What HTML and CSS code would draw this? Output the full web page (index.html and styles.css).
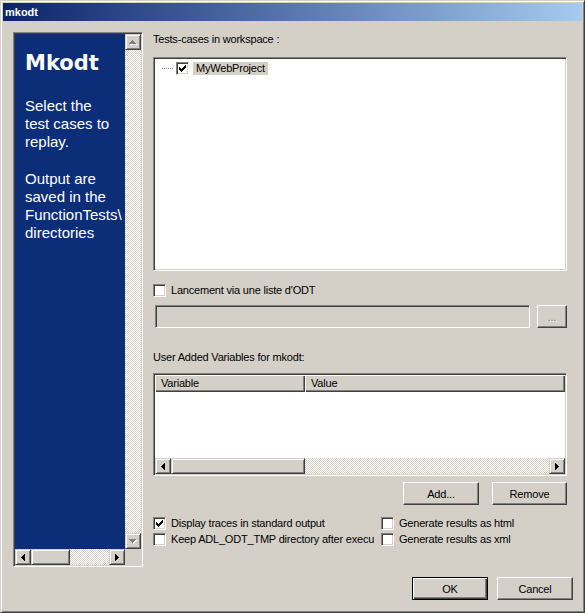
FILE: index.html
```html
<!DOCTYPE html>
<html>
<head>
<meta charset="utf-8">
<title>mkodt</title>
<link rel="stylesheet" href="styles.css">
</head>
<body>
<div class="window">
  <div class="titlebar">mkodt</div>
  <div class="content">
    <div class="side sunken">
      <div class="side-grid">
        <div class="side-view">
          <h1>Mkodt</h1>
          <p>Select the<br>test cases to<br>replay.</p>
          <p>Output are<br>saved in the<br>FunctionTests\<br>directories</p>
        </div>
        <div class="vscroll">
          <div class="sbtn"><svg width="8" height="5" viewBox="0 0 8 5"><path fill="#fff" d="M4 1h1v1H4zM3 2h3v1H3zM2 3h5v1H2zM1 4h7v1H1z"/><path fill="#808080" d="M3 0h1v1H3zM2 1h3v1H2zM1 2h5v1H1zM0 3h7v1H0z"/></svg></div>
          <div class="track"></div>
          <div class="sbtn"><svg width="8" height="5" viewBox="0 0 8 5"><path fill="#fff" d="M1 1h7v1H1zM2 2h5v1H2zM3 3h3v1H3zM4 4h1v1H4z"/><path fill="#808080" d="M0 0h7v1H0zM1 1h5v1H1zM2 2h3v1H2zM3 3h1v1H3z"/></svg></div>
        </div>
        <div class="hscroll">
          <div class="sbtn"><svg width="4" height="7" viewBox="0 0 4 7"><path d="M0 3h1v1H0zM1 2h1v3H1zM2 1h1v5H2zM3 0h1v7H3z"/></svg></div>
          <div class="thumb side-thumb"></div>
          <div class="track"></div>
          <div class="sbtn"><svg width="4" height="7" viewBox="0 0 4 7"><path d="M3 3h1v1H3zM2 2h1v3H2zM1 1h1v5H1zM0 0h1v7H0z"/></svg></div>
        </div>
        <div class="corner"></div>
      </div>
    </div>

    <div class="main">
      <div class="label">Tests-cases in workspace :</div>
      <div class="tree sunken">
        <div class="tree-inner">
          <div class="tree-item">
            <span class="dots"></span>
            <span class="cb"><svg width="9" height="9" viewBox="0 0 9 9"><path d="M1 3h1v1h1v1h1V4h1V3h1V2h1V1h1v3H7v1H6v1H5v1H4v1H3V7H2V6H1z"/></svg></span>
            <span class="item-label">MyWebProject</span>
          </div>
        </div>
      </div>

      <div class="check-row first">
        <span class="cb"></span>
        <span>Lancement via une liste d'ODT</span>
      </div>

      <div class="field-row">
        <div class="field sunken"></div>
        <div class="button small-btn"><span class="disabled-text">...</span></div>
      </div>

      <div class="label label2">User Added Variables for mkodt:</div>

      <div class="table sunken">
        <div class="table-inner">
          <div class="thead">
            <div class="th col-var">Variable</div>
            <div class="th col-val">Value</div>
          </div>
          <div class="tbody"></div>
          <div class="hscroll">
            <div class="sbtn"><svg width="4" height="7" viewBox="0 0 4 7"><path d="M0 3h1v1H0zM1 2h1v3H1zM2 1h1v5H2zM3 0h1v7H3z"/></svg></div>
            <div class="thumb table-thumb"></div>
            <div class="track"></div>
            <div class="sbtn"><svg width="4" height="7" viewBox="0 0 4 7"><path d="M3 3h1v1H3zM2 2h1v3H2zM1 1h1v5H1zM0 0h1v7H0z"/></svg></div>
          </div>
        </div>
      </div>

      <div class="btn-row">
        <div class="button add-btn">Add...</div>
        <div class="button remove-btn">Remove</div>
      </div>

      <div class="options">
        <div class="opt">
          <span class="cb"><svg width="9" height="9" viewBox="0 0 9 9"><path d="M1 3h1v1h1v1h1V4h1V3h1V2h1V1h1v3H7v1H6v1H5v1H4v1H3V7H2V6H1z"/></svg></span>
          <span>Display traces in standard output</span>
        </div>
        <div class="opt">
          <span class="cb"></span>
          <span>Generate results as html</span>
        </div>
        <div class="opt">
          <span class="cb"></span>
          <span>Keep ADL_ODT_TMP directory after execu</span>
        </div>
        <div class="opt">
          <span class="cb"></span>
          <span>Generate results as xml</span>
        </div>
      </div>
    </div>
  </div>

  <div class="footer">
    <div class="button default-btn">OK</div>
    <div class="button">Cancel</div>
  </div>
</div>
</body>
</html>
```

FILE: styles.css
```css
* {
  box-sizing: border-box;
}

html, body {
  margin: 0;
  padding: 0;
}

body {
  width: 585px;
  height: 613px;
  overflow: hidden;
  background: #d4d0c8;
  font-family: "Liberation Sans", Arial, sans-serif;
  font-size: 11px;
  letter-spacing: -0.2px;
  color: #000;
}

.window {
  width: 585px;
  height: 613px;
  display: flex;
  flex-direction: column;
  padding: 2px;
  border: 1px solid;
  border-color: #d4d0c8 #404040 #404040 #d4d0c8;
  box-shadow: inset 1px 1px #fff, inset -1px -1px #808080;
  background: #d4d0c8;
}

.titlebar {
  flex: none;
  height: 18px;
  line-height: 18px;
  padding-left: 2px;
  background: linear-gradient(to right, #0a246a, #a6caf0);
  color: #fff;
  font-weight: bold;
  font-size: 11px;
  letter-spacing: 0;
}

.content {
  display: flex;
  gap: 10px;
  padding: 11px 0 0 10px;
}

.sunken {
  border: 1px solid;
  border-color: #808080 #fff #fff #808080;
  box-shadow: inset 1px 1px #404040, inset -1px -1px #d4d0c8;
  padding: 1px;
}

/* left side panel */
.side {
  flex: none;
  width: 130px;
  height: 535px;
}

.side-grid {
  display: grid;
  grid-template-columns: 110px 16px;
  grid-template-rows: 515px 16px;
  height: 100%;
}

.side-view {
  background: #0c2e78;
  color: #fff;
  overflow: hidden;
  white-space: nowrap;
  padding: 17px 0 0 10px;
  letter-spacing: 0;
}

.side-view h1 {
  margin: 0 0 21px;
  font: bold 21px/25px "DejaVu Sans", Verdana, sans-serif;
}

.side-view p {
  margin: 0;
  font: 15px/18px "Liberation Sans", Arial, sans-serif;
}

.side-view p + p {
  margin-top: 19px;
}

.vscroll {
  display: flex;
  flex-direction: column;
}

.hscroll {
  display: flex;
  height: 16px;
  flex: none;
}

.track {
  flex: 1;
  background: repeating-conic-gradient(#d4d0c8 0 25%, #fff 0 50%) 0 0 / 2px 2px;
}

.sbtn,
.thumb {
  flex: none;
  width: 16px;
  height: 16px;
  display: flex;
  align-items: center;
  justify-content: center;
  background: #d4d0c8;
  border: 1px solid;
  border-color: #d4d0c8 #404040 #404040 #d4d0c8;
  box-shadow: inset 1px 1px #fff, inset -1px -1px #808080;
}

.sbtn svg {
  display: block;
  shape-rendering: crispEdges;
}

.side-thumb {
  width: 39px;
}

.table-thumb {
  width: 134px;
}

.corner {
  background: #d4d0c8;
}

/* main column */
.main {
  width: 414px;
  display: flex;
  flex-direction: column;
  padding-top: 1px;
}

.label {
  line-height: 13px;
  height: 13px;
  white-space: nowrap;
}

.tree {
  margin-top: 11px;
  height: 214px;
  background: #fff;
}

.tree-inner {
  padding: 3px 0 0 7px;
}

.tree-item {
  display: flex;
  align-items: center;
  height: 13px;
}

.dots {
  width: 12px;
  height: 1px;
  margin-right: 2px;
  background: repeating-linear-gradient(to right, #808080 0 1px, transparent 1px 2px);
}

.cb {
  flex: none;
  width: 13px;
  height: 13px;
  display: flex;
  align-items: center;
  justify-content: center;
  background: #fff;
  border: 1px solid;
  border-color: #808080 #fff #fff #808080;
  box-shadow: inset 1px 1px #404040, inset -1px -1px #d4d0c8;
}

.cb svg {
  display: block;
  shape-rendering: crispEdges;
}

.item-label {
  margin-left: 4px;
  padding: 0 3px;
  line-height: 13px;
  background: #d4d0c8;
}

.check-row {
  display: flex;
  align-items: center;
  gap: 5px;
  height: 13px;
  line-height: 13px;
  margin-top: 13px;
  white-space: nowrap;
}

.field-row {
  display: flex;
  gap: 7px;
  height: 23px;
  margin-top: 8px;
  padding-left: 2px;
}

.field {
  flex: 1;
  background: #d4d0c8;
}

.button {
  display: flex;
  align-items: center;
  justify-content: center;
  height: 23px;
  background: #d4d0c8;
  border: 1px solid;
  border-color: #fff #404040 #404040 #fff;
  box-shadow: inset -1px -1px #808080;
  white-space: nowrap;
}

.small-btn {
  width: 30px;
  flex: none;
}

.disabled-text {
  color: #808080;
  text-shadow: 1px 1px #fff;
}

.label2 {
  margin-top: 23px;
}

.table {
  margin-top: 9px;
  height: 103px;
}

.table-inner {
  display: flex;
  flex-direction: column;
  height: 100%;
}

.thead {
  display: flex;
  height: 17px;
  flex: none;
}

.th {
  height: 17px;
  line-height: 16px;
  padding-left: 6px;
  background: #d4d0c8;
  box-shadow: inset 1px 1px #fff, inset -1px -1px #404040, inset -2px -2px #808080;
}

.col-var {
  width: 150px;
}

.col-val {
  flex: 1;
}

.tbody {
  flex: 1;
  background: #fff;
}

.btn-row {
  display: flex;
  justify-content: flex-end;
  gap: 13px;
  margin-top: 6px;
}

.add-btn {
  width: 76px;
}

.remove-btn {
  width: 75px;
}

.options {
  display: grid;
  grid-template-columns: 225px 1fr;
  column-gap: 3px;
  row-gap: 3px;
  margin-top: 12px;
}

.opt {
  display: flex;
  align-items: center;
  gap: 5px;
  height: 13px;
  line-height: 13px;
  overflow: hidden;
  white-space: nowrap;
}

.footer {
  display: flex;
  justify-content: flex-end;
  gap: 9px;
  margin-top: 10px;
  padding-right: 9px;
}

.footer .button {
  width: 76px;
}

.default-btn {
  border: 1px solid #000;
  box-shadow: inset 1px 1px #fff, inset -1px -1px #404040, inset -2px -2px #808080;
}
```
